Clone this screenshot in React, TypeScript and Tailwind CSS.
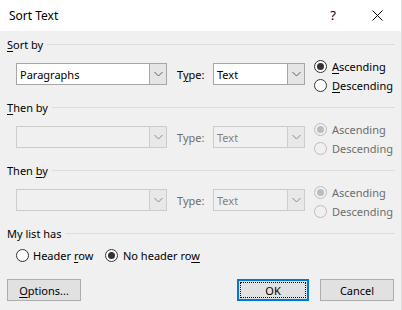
import React from "react";

function Radio({ checked, disabled }: { checked?: boolean; disabled?: boolean }) {
  return (
    <span
      className={`shrink-0 w-[13px] h-[13px] rounded-full border flex items-center justify-center ${
        disabled ? "border-[#bcbcbc] bg-[#f0f0f0]" : "border-[#333333] bg-white"
      }`}
    >
      {checked && (
        <span className={`w-[7px] h-[7px] rounded-full ${disabled ? "bg-[#bcbcbc]" : "bg-[#333333]"}`} />
      )}
    </span>
  );
}

function Chevron({ disabled }: { disabled?: boolean }) {
  return (
    <svg width="9" height="6" viewBox="0 0 9 6">
      <polyline
        points="0.5,1 4.5,5 8.5,1"
        fill="none"
        stroke={disabled ? "#8a8a8a" : "#606060"}
        strokeWidth="1"
      />
    </svg>
  );
}

function Combo({ width, text, disabled }: { width: string; text: string; disabled?: boolean }) {
  return (
    <div
      className={`${width} mt-[6px] h-[22px] flex border ${
        disabled ? "border-[#cccccc] bg-[#f0f0f0] text-[#838383]" : "border-[#a6a6a6] bg-white text-black"
      }`}
    >
      <div className="flex-1 flex items-center pl-[3px] overflow-hidden whitespace-nowrap">{text}</div>
      <div
        className={`w-[17px] flex items-center justify-center border-l ${
          disabled ? "border-[#cccccc] bg-[#e8e8e8]" : "border-[#a6a6a6] bg-[#e5e5e5]"
        }`}
      >
        <Chevron disabled={disabled} />
      </div>
    </div>
  );
}

function Header({ children }: { children: React.ReactNode }) {
  return (
    <div className="h-[16px] flex items-center">
      <span className="whitespace-nowrap">{children}</span>
      <div className="flex-1 h-px bg-[#dcdcdc] ml-[4px]" />
    </div>
  );
}

function SortRow({ disabled, first }: { disabled?: boolean; first?: boolean }) {
  const tc = disabled ? "text-[#6d6d6d]" : "text-black";
  return (
    <div className="mt-[5px] mb-[4px] h-[38px] flex items-start pl-[9px]">
      <Combo width="w-[151px]" text={first ? "Paragraphs" : ""} disabled={disabled} />
      <div className={`ml-[10px] mt-[6px] h-[22px] w-[36px] flex items-center ${tc}`}>
        {first ? (
          <span>
            T<u className="underline-offset-[2px]">y</u>pe:
          </span>
        ) : (
          <span>Type:</span>
        )}
      </div>
      <Combo width="w-[92px]" text="Text" disabled={disabled} />
      <div className={`ml-[9px] flex flex-col ${tc}`}>
        <div className="h-[19px] flex items-center gap-[5px]">
          <Radio checked disabled={disabled} />
          {first ? (
            <span>
              <u className="underline-offset-[2px]">A</u>scending
            </span>
          ) : (
            <span>Ascending</span>
          )}
        </div>
        <div className="h-[19px] flex items-center gap-[5px]">
          <Radio disabled={disabled} />
          {first ? (
            <span>
              <u className="underline-offset-[2px]">D</u>escending
            </span>
          ) : (
            <span>Descending</span>
          )}
        </div>
      </div>
    </div>
  );
}

function Button({ width, children, focused }: { width: string; children: React.ReactNode; focused?: boolean }) {
  return (
    <div
      className={`${width} h-[22px] flex items-center justify-center bg-[#e1e1e1] ${
        focused ? "border-2 border-[#0078d7] p-[1px]" : "border border-[#adadad]"
      }`}
    >
      {focused ? (
        <div className="w-full h-full border border-dotted border-black flex items-center justify-center">
          {children}
        </div>
      ) : (
        children
      )}
    </div>
  );
}

export default function App() {
  return (
    <div
      className="w-[402px] h-[310px] bg-[#f0f0f0] flex flex-col overflow-hidden text-[11px] leading-none text-black border-r border-[#dcdcdc]"
      style={{ fontFamily: '"Noto Sans", "Open Sans", sans-serif' }}
    >
      <div className="h-[31px] shrink-0 bg-white flex items-center">
        <span className="ml-[9px] text-[12px]">Sort Text</span>
        <span className="ml-auto text-[13px] mr-[36px]">?</span>
        <svg width="11" height="11" viewBox="0 0 11 11" className="mr-[18px]">
          <line x1="0.5" y1="0.5" x2="10.5" y2="10.5" stroke="#000" strokeWidth="1" />
          <line x1="10.5" y1="0.5" x2="0.5" y2="10.5" stroke="#000" strokeWidth="1" />
        </svg>
      </div>
      <div className="flex flex-col pl-[7px] pr-[6px] pt-[5px]">
        <Header>
          <u className="underline-offset-[2px]">S</u>ort by
        </Header>
        <SortRow first />
        <Header>
          <u className="underline-offset-[2px]">T</u>hen by
        </Header>
        <SortRow disabled />
        <Header>
          Then <u className="underline-offset-[2px]">b</u>y
        </Header>
        <SortRow disabled />
        <Header>My list has</Header>
        <div className="mt-[5px] h-[19px] flex items-center pl-[9px]">
          <div className="w-[89px] flex items-center gap-[4px]">
            <Radio />
            <span>
              Header <u className="underline-offset-[2px]">r</u>ow
            </span>
          </div>
          <div className="flex items-center gap-[5px]">
            <Radio checked />
            <span>
              No header ro<u className="underline-offset-[2px]">w</u>
            </span>
          </div>
        </div>
        <div className="mt-[14px] flex pr-[1px]">
          <Button width="w-[74px]">
            <span>
              <u className="underline-offset-[2px]">O</u>ptions...
            </span>
          </Button>
          <div className="ml-auto">
            <Button width="w-[72px]" focused>
              OK
            </Button>
          </div>
          <div className="ml-[11px]">
            <Button width="w-[74px]">Cancel</Button>
          </div>
        </div>
      </div>
    </div>
  );
}
